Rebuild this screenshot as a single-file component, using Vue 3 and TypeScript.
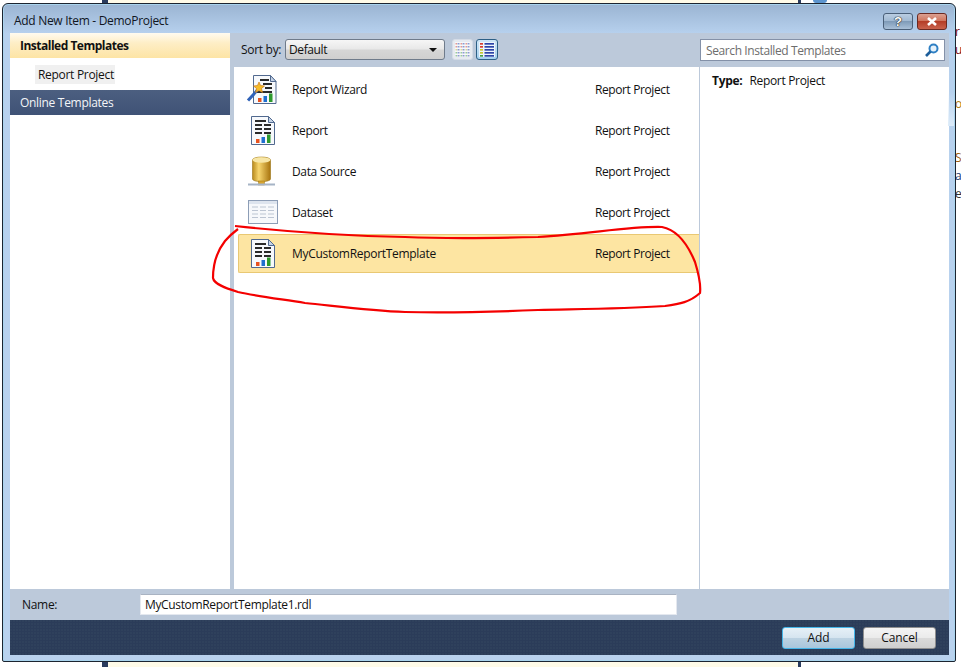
<script setup lang="ts">
interface Item { name: string; icon: string; selected?: boolean }
const items: Item[] = [
  { name: 'Report Wizard', icon: 'wizard' },
  { name: 'Report', icon: 'report' },
  { name: 'Data Source', icon: 'source' },
  { name: 'Dataset', icon: 'dataset' },
  { name: 'MyCustomReportTemplate', icon: 'report', selected: true },
]
const rowColors = ['#d43c30', '#d43c30', '#c8c830', '#c8c830', '#45a045']
</script>

<template>
  <div class="desk">
    <div class="bg">
      <div class="bg-gap"></div>
      <div class="bg-bar"></div>
      <div class="bg-doc"></div>
      <div class="bg-bar thin"></div>
      <div class="bg-rest"></div>
    </div>
    <span class="frag" style="top:24px;color:#7a1020">r</span>
    <span class="frag" style="top:42px;color:#7a1020">u</span>
    <span class="frag" style="top:96px;color:#b07a10">o</span>
    <span class="frag" style="top:150px;color:#a06010">S</span>
    <span class="frag" style="top:168px;color:#203a70">a</span>
    <span class="frag" style="top:186px;color:#333">e</span>
    <i class="peek"></i>

    <div class="window">
      <div class="title">
        <span class="title-text">Add New Item - DemoProject</span>
        <div class="ctrls">
          <div class="ctrl help">?</div>
          <div class="ctrl close">
            <svg width="12" height="9" viewBox="0 0 12 9"><path d="M2 1l8 7M10 1L2 8" stroke="#fff" stroke-width="2.6" fill="none"/></svg>
          </div>
        </div>
      </div>

      <div class="client">
        <div class="main">
          <aside class="left">
            <div class="tree-head">Installed Templates</div>
            <div class="tree-sub"><span>Report Project</span></div>
            <div class="tree-online">Online Templates</div>
          </aside>

          <div class="center">
            <div class="toolbar">
              <span class="sort-label">Sort by:</span>
              <div class="combo"><span>Default</span><i class="caret"></i></div>
              <div class="view v1">
                <svg width="15" height="15" viewBox="0 0 15 15">
                  <rect width="15" height="15" fill="#f7f8fa"/>
                  <g v-for="x in [0.5, 5.5, 10.500]" :key="x">
                    <g v-for="y in [1, 4, 7, 10, 13]" :key="y">
                      <rect :x="x" :y="y" width="1.5" height="1.500" :fill="y < 5 ? '#e59a92' : y < 9 ? '#dcdc98' : '#9ccc9c'"/>
                      <rect :x="x + 2" :y="y" width="2" height="1.500" fill="#8d9bd0"/>
                    </g>
                  </g>
                </svg>
              </div>
              <div class="view v2">
                <svg width="16" height="15" viewBox="0 0 16 15">
                  <rect width="16" height="15" fill="#eef5fb"/>
                  <g v-for="(c, i) in rowColors" :key="i">
                    <rect x="1" :y="1 + i * 3" width="3" height="1.700" :fill="c"/>
                    <rect x="5.500" :y="1 + i * 3" width="9.500" height="1.700" fill="#2c45a8"/>
                  </g>
                </svg>
              </div>
            </div>
            <div class="list">
              <div v-for="it in items" :key="it.name" class="row" :class="{ sel: it.selected }">
                <div class="ico">
                  <svg v-if="it.icon === 'report'" width="32" height="32" viewBox="0 0 32 32">
                    <path d="M5.500 1.500h17l6 6v22h-23z" fill="#f7f9fc" stroke="#51698f"/>
                    <path d="M22.500 1.500v6h6z" fill="#c5d3e6" stroke="#51698f"/>
                    <g fill="#2a2a2a">
                      <rect x="9" y="5" width="11" height="2"/>
                      <rect x="9" y="9" width="7" height="2"/><rect x="18" y="9" width="7" height="2"/>
                      <rect x="9" y="13" width="7" height="2"/><rect x="18" y="13" width="7" height="2"/>
                      <rect x="9" y="17" width="7" height="2"/><rect x="18" y="17" width="7" height="2"/>
                    </g>
                    <rect x="10" y="24" width="3.500" height="4" fill="#e8531f"/>
                    <rect x="15.500" y="22" width="3.500" height="6" fill="#1f6fd0"/>
                    <rect x="21" y="19.500" width="3.500" height="8.500" fill="#2d9a2d"/>
                  </svg>
                  <svg v-else-if="it.icon === 'wizard'" width="32" height="32" viewBox="0 0 32 32">
                    <path d="M7.500 1.500h17l5.500 6v22H7.500z" fill="#f7f9fc" stroke="#51698f"/>
                    <path d="M24.500 1.500v6h5.500z" fill="#c5d3e6" stroke="#51698f"/>
                    <g fill="#2a2a2a">
                      <rect x="14" y="5" width="9" height="2"/>
                      <rect x="17" y="9" width="9" height="2"/>
                      <rect x="19" y="13" width="7" height="2"/>
                      <rect x="11" y="17" width="15" height="2"/>
                    </g>
                    <rect x="12" y="24" width="3.500" height="4" fill="#e8531f"/>
                    <rect x="17.500" y="22" width="3.500" height="6" fill="#1f6fd0"/>
                    <rect x="23" y="19.500" width="3.500" height="8.500" fill="#2d9a2d"/>
                    <path d="M2 26.500L11.500 16" stroke="#2f62b8" stroke-width="3"/>
                    <path d="M13 8l1.500 3.500 4 .5-3 2.500 1 4-3.500-2-3.500 2 1-4-3-2.500 4-.5z" fill="#f6bd2a" stroke="#cd7d1c" stroke-width=".7"/>
                  </svg>
                  <svg v-else-if="it.icon === 'source'" width="32" height="32" viewBox="0 0 32 32">
                    <defs>
                      <linearGradient id="can" x1="0" x2="1" y1="0" y2="0">
                        <stop offset="0" stop-color="#b98a1c"/><stop offset=".35" stop-color="#f7d66f"/><stop offset="1" stop-color="#a8740e"/>
                      </linearGradient>
                    </defs>
                    <path d="M6.500 4c0-4 18-4 18 0v19c0 3.500-18 3.500-18 0z" fill="url(#can)" stroke="#9a7414" stroke-width=".6"/>
                    <ellipse cx="15.500" cy="4" rx="9" ry="2.700" fill="#f7e6a6"/>
                    <rect x="12.500" y="25" width="6" height="4" fill="#d9a52e" stroke="#9a7414" stroke-width=".5"/>
                    <rect x="2" y="27.500" width="27" height="2" fill="#a6b4c6"/>
                  </svg>
                  <svg v-else width="32" height="32" viewBox="0 0 32 32">
                    <rect x="2.500" y="3.500" width="29" height="23" fill="#f6f8fb" stroke="#8c9db6"/>
                    <rect x="3" y="4" width="28" height="3" fill="#dde4ee"/>
                    <g stroke="#bcc5d3" stroke-width="1.200">
                      <path d="M6 10h6M14 10h6M22 10h6M6 13.500h6M14 13.500h6M22 13.500h6M6 17h6M14 17h6M22 17h6M6 20.500h6M14 20.500h6M22 20.500h6"/>
                    </g>
                  </svg>
                </div>
                <span class="name">{{ it.name }}</span>
                <span class="type">Report Project</span>
              </div>
            </div>
          </div>

          <div class="info">
            <div class="search">
              <span>Search Installed Templates</span>
              <svg width="16" height="15" viewBox="0 0 16 15"><circle cx="9.500" cy="5.500" r="4" fill="#e6f2fb" stroke="#2f80c4" stroke-width="2"/><path d="M6.500 8.500L2 13" stroke="#1d5e9a" stroke-width="2.600"/></svg>
            </div>
            <div class="details"><b>Type:</b><span>Report Project</span></div>
          </div>
        </div>

        <div class="namebar">
          <span class="name-label">Name:</span>
          <div class="name-input">MyCustomReportTemplate1.rdl</div>
        </div>
        <div class="footer">
          <div class="btn add">Add</div>
          <div class="btn">Cancel</div>
        </div>
      </div>
    </div>

    <svg class="ink" width="961" height="667" viewBox="0 0 961 667">
      <path d="M235 226C290 232 350 236 405 237C450 239 500 238 538 237C590 234 630 226 662 227C678 230 688 245 695 262C699 275 701 285 700 293C690 302 680 304 665 306C620 309 580 309 538 310C490 312 440 313 405 312C370 311 335 306 305 303C280 299 255 296 238 292C225 288 214 284 213 278C213 262 218 250 225 241C230 235 234 232 238 229" fill="none" stroke="#f40000" stroke-width="2.200"/>
    </svg>
  </div>
</template>

<style>
html, body { margin: 0; background: #fff; }
</style>

<style scoped>
.desk {
  position: relative; width: 961px; height: 667px; overflow: hidden;
  font: 12px "Open Sans", "Noto Sans", sans-serif; color: #111;
}
.bg { display: flex; height: 100%; }
.bg-gap { width: 102px; background: #fff; }
.bg-bar { width: 6px; background: #2a3b5e; }
.bg-bar.thin { width: 3px; }
.bg-doc { width: 690px; background: #fffbe8; }
.bg-rest { flex: 1; background: #fff; }
.frag { position: absolute; left: 955px; font-size: 12px; line-height: 16px; }
.peek { position: absolute; left: 813px; top: 0; width: 14px; height: 3px; background: #5c95cf; border-radius: 0 0 5px 5px; }

.window {
  position: absolute; left: 2px; top: 3px; width: 954px; height: 659px; box-sizing: border-box;
  border: 1px solid #1c2430; border-radius: 6px 6px 2px 2px;
  display: flex; flex-direction: column; padding: 0 6px 6px 7px;
  background: linear-gradient(180deg, #9ab4d2 0, #b7d1ee 30px, #b9d2ee 100%);
  box-shadow: inset 0 0 0 1px #a9d4ee;
}
.window::after {
  content: ""; position: absolute; right: 1px; top: 88px; width: 6px; height: 34px;
  background: linear-gradient(180deg, rgba(225,238,250,0), #dcebf9);
}
.title { height: 29px; flex: none; display: flex; justify-content: space-between; }
.title-text { margin: 9px 0 0 4px; font-size: 12px; line-height: 16px; color: #10161f; letter-spacing: -.3px; }
.ctrls { display: flex; gap: 4px; margin: 9px 2px 0 0; }
.ctrl {
  height: 17px; width: 30px; box-sizing: border-box; border: 1px solid #4a5f78; border-radius: 3px;
  display: flex; align-items: center; justify-content: center;
}
.help {
  background: linear-gradient(180deg, #b9cde2 0, #a1b9d2 45%, #7f9bb8 50%, #a9c0d8 100%);
  color: #fff; font: bold 13px "Liberation Sans", sans-serif; text-shadow: 0 0 1px #222, 0 0 1px #222, 0 0 1px #222;
}
.close {
  background: linear-gradient(180deg, #dba091 0, #d0765f 45%, #b53e28 50%, #c9624c 100%);
  border-color: #6a2a22;
}

.client { flex: 1; display: flex; flex-direction: column; min-height: 0; }
.main { flex: 1; display: flex; min-height: 0; background: #bcc9da; }

.left { width: 220px; background: #fff; flex: none; }
.tree-head {
  height: 25px; line-height: 25px; padding-left: 10px; font-weight: 700; color: #111;
  background: linear-gradient(180deg, #fffbf0 0, #feeec6 40%, #fde4a5 100%); letter-spacing: -.5px;
}
.tree-sub { height: 32px; padding: 7px 0 0 25px; box-sizing: border-box; }
.tree-sub span { display: inline-block; background: #f0f0f0; height: 19px; line-height: 19px; padding: 0 2px 0 3px; width: 75px; white-space: nowrap; letter-spacing: -.3px; }
.tree-online {
  height: 25px; line-height: 25px; padding-left: 10px; color: #f3f5f8; letter-spacing: -.3px;
  background: linear-gradient(180deg, #4c5f80 0, #3f5276 100%);
}

.center { flex: none; width: 466px; margin-left: 4px; display: flex; flex-direction: column; }
.toolbar { height: 34px; flex: none; display: flex; align-items: flex-start; box-sizing: border-box; padding: 6px 0 0 7px; }
.sort-label { line-height: 21px; width: 44px; letter-spacing: -.3px; }
.combo {
  width: 160px; height: 21px; box-sizing: border-box; border: 1px solid #6f7b8b; border-radius: 3px;
  background: linear-gradient(180deg, #f6f6f6 0, #e8e8e8 48%, #d6d6d6 52%, #cfcfcf 100%);
  display: flex; align-items: center; justify-content: space-between; padding: 0 7px 0 3px; letter-spacing: -.4px;
}
.caret { width: 0; height: 0; border: 4px solid transparent; border-top: 4px solid #111; border-bottom: 0; }
.view {
  width: 21px; height: 21px; box-sizing: border-box; border-radius: 3px; display: flex; align-items: center; justify-content: center;
}
.v1 { margin-left: 7px; border: 1px solid #d5dce7; background: #e7ebf1; }
.v2 { margin-left: 3px; width: 22px; border: 1px solid #2d5f86; background: linear-gradient(180deg, #cfe6f7, #a6d1ef); }
.list { flex: 1; background: #fff; padding: 3px 0 0 4px; border-right: 1px solid #bcc9da; }
.row {
  height: 39px; margin-bottom: 2px; display: flex; align-items: center; position: relative; box-sizing: border-box;
  border: 1px solid transparent; border-right: 0; border-radius: 2px 0 0 2px;
}
.row.sel { background: #fde5a2; border-color: #e9c873; }
.ico { width: 53px; flex: none; display: flex; justify-content: center; padding-right: 8px; box-sizing: border-box; }
.name { width: 303px; flex: none; letter-spacing: -.35px; white-space: nowrap; }
.sel .name { letter-spacing: -.3px; }
.type { letter-spacing: -.4px; white-space: nowrap; }

.info { flex: 1; display: flex; flex-direction: column; min-width: 0; }
.search {
  height: 22px; margin: 6px 4px 6px 0; flex: none; box-sizing: border-box; border: 1px solid #8491a8; background: #fff;
  display: flex; align-items: center; justify-content: space-between; padding: 0 4px 0 5px; color: #6d6d6d; letter-spacing: -.4px;
}
.details { flex: 1; background: #fff; padding: 5px 0 0 12px; display: flex; gap: 7px; line-height: 18px; align-items: flex-start; }
.details b { letter-spacing: -.3px; color: #111; }
.details span { letter-spacing: -.32px; }

.namebar { height: 31px; flex: none; background: #bcc9da; display: flex; align-items: center; box-sizing: border-box; padding-left: 12px; }
.name-label { width: 118px; letter-spacing: -.3px; }
.name-input {
  width: 537px; height: 21px; line-height: 20px; box-sizing: border-box; background: #fff; padding-left: 4px;
  border: 1px solid #e4e8ef; border-top-color: #a9b3c2; letter-spacing: -.35px;
}
.footer {
  height: 35px; flex: none; box-sizing: border-box; display: flex; justify-content: flex-end; align-items: center; gap: 8px; padding: 0 13px 0 0;
  background-color: #2b3c59;
  background-image: radial-gradient(circle at 1px 1px, #2f415c 1px, transparent 1.100px);
  background-size: 3px 3px;
}
.btn {
  width: 73px; height: 22px; box-sizing: border-box; border: 1px solid #8f8f8f; border-radius: 3px; text-align: center; line-height: 20px;
  background: linear-gradient(180deg, #f4f4f4 0, #ebebeb 48%, #dadada 52%, #cfcfcf 100%);
  letter-spacing: -.1px;
}
.btn.add {
  border-color: #45b5e8;
  background: linear-gradient(180deg, #e6f0f7 0, #d6e5f0 48%, #bcd2e2 52%, #a9c6dc 100%);
}
.ink { position: absolute; left: 0; top: 0; pointer-events: none; }
</style>
